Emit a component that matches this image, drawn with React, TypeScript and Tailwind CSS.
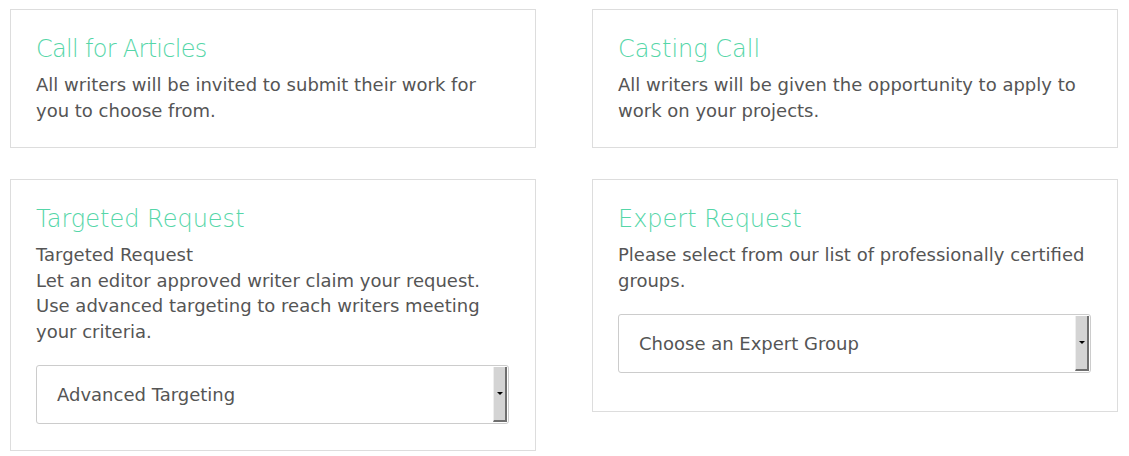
import React from "react";

function Select({ label }: { label: string }) {
  return (
    <div className="flex h-[59px] items-stretch rounded-[3px] border border-[#cccccc] bg-white">
      <div className="flex flex-1 items-center pl-[20px] text-[18px] text-[#555555]">{label}</div>
      <div className="my-[1px] mr-[1px] flex w-[14px] items-center justify-center border-l border-l-[#eeeeee] border-r-2 border-b-2 border-r-[#6f6f6f] border-b-[#6f6f6f] bg-[#d4d4d4]">
        <div className="h-0 w-0 border-x-[3px] border-t-[3px] border-x-transparent border-t-black" />
      </div>
    </div>
  );
}

function Card({
  title,
  children,
  className = "",
  titleClass = "",
}: {
  title: string;
  children: React.ReactNode;
  className?: string;
  titleClass?: string;
}) {
  return (
    <div className={"border border-[#dddddd] bg-white pl-[25px] pr-[26px] pt-[22px] " + className}>
      <h3 className={"text-[24px] leading-[34px] font-extralight text-[#55d6a8] " + titleClass}>{title}</h3>
      {children}
    </div>
  );
}

export default function App() {
  return (
    <div
      className="min-h-[456px] bg-white text-[#555555]"
      style={{ fontFamily: "'DejaVu Sans', 'Liberation Sans', sans-serif" }}
    >
      <div className="grid grid-cols-[526px_526px] items-start gap-x-[56px] gap-y-[31px] pl-[10px] pt-[9px]">
        <Card title="Call for Articles" className="h-[139px]" titleClass="tracking-[-0.7px]">
          <p className="mt-[6px] text-[18px] leading-[25.5px]">
            All writers will be invited to submit their work for you to choose from.
          </p>
        </Card>
        <Card title="Casting Call" className="h-[139px]">
          <p className="mt-[6px] text-[18px] leading-[25.5px]">
            All writers will be given the opportunity to apply to work on your projects.
          </p>
        </Card>
        <Card title="Targeted Request" className="h-[272px]">
          <p className="mt-[6px] text-[18px] leading-[25.5px]">
            Targeted Request
            <br />
            Let an editor approved writer claim your request. Use advanced targeting to reach writers meeting your
            criteria.
          </p>
          <div className="mt-[21px]">
            <Select label="Advanced Targeting" />
          </div>
        </Card>
        <Card title="Expert Request" className="h-[233px]">
          <p className="mt-[6px] text-[18px] leading-[25.5px]">
            Please select from our list of professionally certified groups.
          </p>
          <div className="mt-[21px]">
            <Select label="Choose an Expert Group" />
          </div>
        </Card>
      </div>
    </div>
  );
}
